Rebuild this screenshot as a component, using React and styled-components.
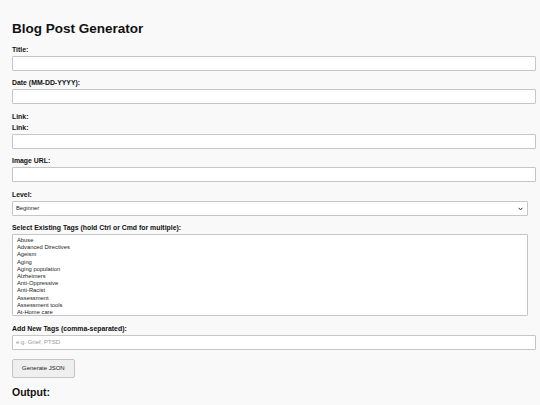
import React from "react";
import styled, { createGlobalStyle } from "styled-components";

const GlobalStyle = createGlobalStyle`
  html, body {
    margin: 0;
    background: #f9f9f9;
  }
  body {
    font-family: "Liberation Sans", Arial, sans-serif;
    color: #111;
  }
`;

const Page = styled.div`
  padding: 12px;
`;

const Heading = styled.h1`
  font-size: 13.5px;
  line-height: 16px;
  font-weight: bold;
  margin: 9px 0 0;
`;

const Label = styled.label`
  display: block;
  font-size: 6.9px;
  line-height: 8px;
  font-weight: bold;
  margin: 8.5px 0 2px;

  & + & {
    margin-top: 3px;
  }
`;

const TextInput = styled.input`
  display: block;
  width: 100%;
  height: 7px;
  padding: 3px;
  margin: 0;
  border: 1px solid #c6c6c6;
  border-radius: 1px;
  background: #fff;
  font-family: inherit;
  font-size: 6px;
  outline: none;

  &::placeholder {
    color: #9a9a9a;
  }
`;

const SelectWrap = styled.div`
  position: relative;
`;

const Chevron = styled.svg`
  position: absolute;
  right: 5px;
  top: 6px;
  width: 5px;
  height: 4px;
  pointer-events: none;
`;

const Select = styled.select`
  display: block;
  box-sizing: border-box;
  width: 100%;
  height: ${(props) => (props.multiple ? "82px" : "15px")};
  padding: ${(props) => (props.multiple ? "2px 3px" : "0 3px")};
  margin: 0;
  border: 1px solid #c6c6c6;
  border-radius: 1px;
  background: #fff;
  appearance: ${(props) => (props.multiple ? "auto" : "none")};
  font-family: inherit;
  font-size: 5.8px;
  color: #222;
  outline: none;

  option {
    padding: 0 1px;
    line-height: 7.2px;
    min-height: 7.2px;
  }
`;

const Button = styled.button`
  display: block;
  margin-top: 9px;
  height: 19px;
  padding: 0 9px;
  background: #efefef;
  border: 1px solid #c4c4c4;
  border-radius: 2px;
  font-family: inherit;
  font-size: 6px;
  color: #222;
`;

const SubHeading = styled.h2`
  font-size: 10.5px;
  line-height: 12px;
  font-weight: bold;
  margin: 8px 0 0;
`;

const tags = [
  "Abuse",
  "Advanced Directives",
  "Ageism",
  "Aging",
  "Aging population",
  "Alzheimers",
  "Anti-Oppressive",
  "Anti-Racist",
  "Assessment",
  "Assessment tools",
  "At-Home care",
  "Bereavement",
  "Burnout",
];

export default function App() {
  return (
    <>
      <GlobalStyle />
      <Page>
        <Heading>Blog Post Generator</Heading>

        <Label htmlFor="title">Title:</Label>
        <TextInput id="title" type="text" />

        <Label htmlFor="date">Date (MM-DD-YYYY):</Label>
        <TextInput id="date" type="text" />

        <Label>Link:</Label>
        <Label htmlFor="link">Link:</Label>
        <TextInput id="link" type="text" />

        <Label htmlFor="image">Image URL:</Label>
        <TextInput id="image" type="text" />

        <Label htmlFor="level">Level:</Label>
        <SelectWrap>
          <Select id="level" defaultValue="Beginner">
            <option>Beginner</option>
            <option>Intermediate</option>
            <option>Advanced</option>
          </Select>
          <Chevron viewBox="0 0 5 4">
            <path d="M0.6 0.8 L2.5 2.9 L4.4 0.8" fill="none" stroke="#333" strokeWidth="1" />
          </Chevron>
        </SelectWrap>

        <Label htmlFor="tags">
          Select Existing Tags (hold Ctrl or Cmd for multiple):
        </Label>
        <Select id="tags" multiple>
          {tags.map((t) => (
            <option key={t}>{t}</option>
          ))}
        </Select>

        <Label htmlFor="newtags">Add New Tags (comma-separated):</Label>
        <TextInput id="newtags" type="text" placeholder="e.g. Grief, PTSD" />

        <Button type="button">Generate JSON</Button>

        <SubHeading>Output:</SubHeading>
      </Page>
    </>
  );
}
